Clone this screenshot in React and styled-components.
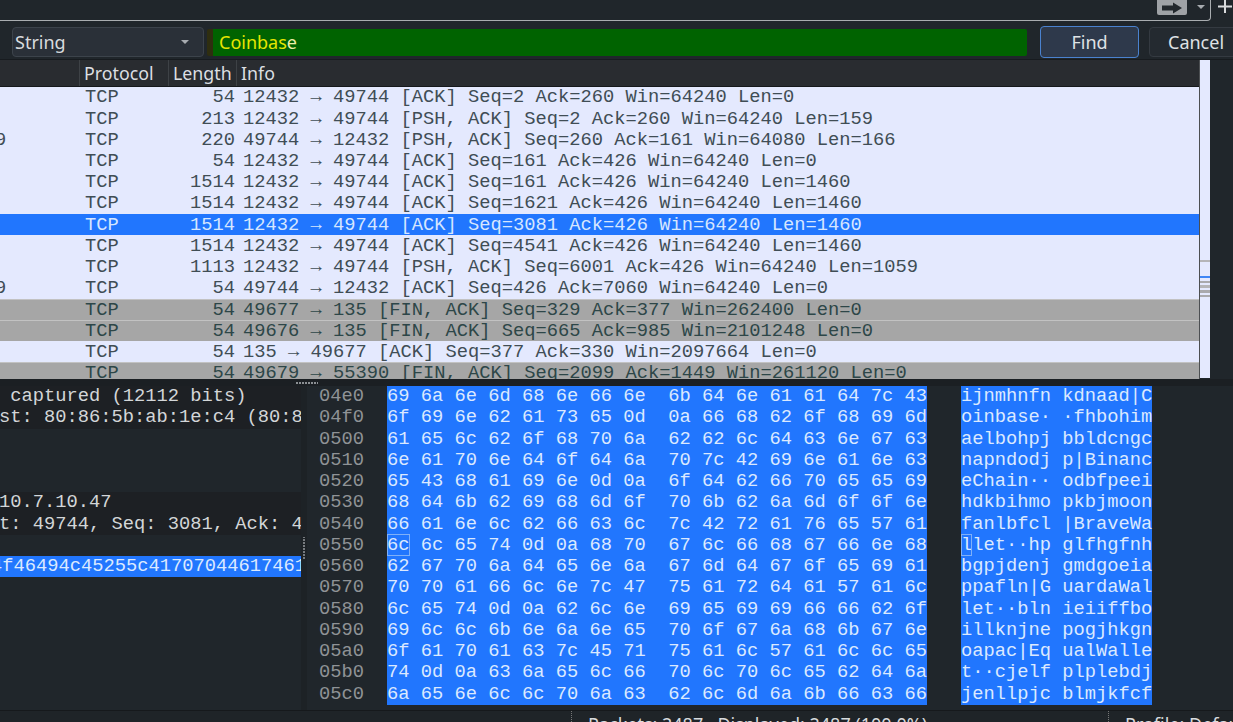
import React from 'react';
import styled, { createGlobalStyle } from 'styled-components';

const GlobalStyle = createGlobalStyle`
  html, body {
    margin: 0;
    padding: 0;
    background: #20262b;
    overflow: hidden;
  }
`;

const mono = `"Liberation Mono", monospace`;
const sans = `"Noto Sans", sans-serif`;
const blue = '#2176fe';

const Window = styled.div`
  width: 1233px;
  height: 722px;
  overflow: hidden;
  display: flex;
  flex-direction: column;
  background: #20262b;
  font-family: ${sans};
`;

const TopBar = styled.div`
  flex: none;
  height: 22px;
  display: flex;
  align-items: flex-start;
`;

const TabFrame = styled.div`
  box-sizing: border-box;
  width: 1211px;
  height: 21px;
  display: flex;
  justify-content: flex-end;
  align-items: flex-start;
  gap: 10px;
  padding-right: 5px;
  border-right: 1px solid #a9adb0;
  border-bottom: 1px solid #a9adb0;
  border-bottom-right-radius: 4px;
`;

const ArrowButton = styled.div`
  width: 30px;
  height: 15px;
  background: #9fa2a6;
  border-radius: 0 0 2px 2px;
  display: flex;
  align-items: center;
  justify-content: center;
`;

const Caret = styled.div`
  width: 0;
  height: 0;
  margin-top: ${(p) => p.$top || 0}px;
  border-left: 4px solid transparent;
  border-right: 4px solid transparent;
  border-top: 4px solid #a7abb0;
`;

const PlusWrap = styled.div`
  margin-left: 6px;
  color: #d8dadc;
  line-height: 0;
`;

const FindBar = styled.div`
  flex: none;
  height: 38px;
  box-sizing: border-box;
  padding: 5px 0 2px 12px;
  display: flex;
  align-items: center;
  border-bottom: 1px solid #171b1f;
`;

const Combo = styled.div`
  flex: none;
  box-sizing: border-box;
  width: 192px;
  height: 30px;
  padding: 0 14px 0 2px;
  display: flex;
  align-items: center;
  justify-content: space-between;
  background: #2a3038;
  border: 1px solid #3c434b;
  border-radius: 4px;
  color: #d8dbde;
  font-size: 18px;
`;

const SearchField = styled.div`
  flex: none;
  box-sizing: border-box;
  width: 820px;
  height: 27px;
  margin-left: 3px;
  margin-right: 13px;
  padding-left: 6px;
  border-left: 6px solid #2f2e10;
  display: flex;
  align-items: center;
  background: #006300;
  border-radius: 2px;
  color: #e6e600;
  font-size: 18px;
`;

const LastLetter = styled.span`
  color: #eeeea8;
`;

const Button = styled.div`
  flex: none;
  box-sizing: border-box;
  width: ${(p) => (p.$primary ? '99px' : '100px')};
  height: ${(p) => (p.$primary ? '32px' : '30px')};
  margin-left: ${(p) => (p.$primary ? '0' : '10px')};
  display: flex;
  align-items: center;
  justify-content: ${(p) => (p.$primary ? 'center' : 'flex-start')};
  padding-left: ${(p) => (p.$primary ? '0' : '18px')};
  background: ${(p) => (p.$primary ? '#2e394b' : '#242a30')};
  border: 1px solid ${(p) => (p.$primary ? '#4a82cf' : '#343a41')};
  border-radius: 4px;
  color: #dfe2e5;
  font-size: 18px;
`;

const ListArea = styled.div`
  flex: none;
  height: 319px;
  display: flex;
`;

const PacketList = styled.div`
  box-sizing: border-box;
  width: 1200px;
  border-right: 1px solid #4c4f52;
  overflow: hidden;
`;

const HeaderRow = styled.div`
  box-sizing: border-box;
  height: 26.8px;
  display: flex;
  align-items: center;
  background: #292c30;
  border-bottom: 1px solid #15181b;
  color: #dcdfe2;
  font-size: 17.8px;
`;

const HeaderCell = styled.div`
  box-sizing: border-box;
  width: ${(p) => p.$w}px;
  height: 100%;
  padding-left: 4px;
  display: flex;
  align-items: center;
  border-right: ${(p) => (p.$last ? 'none' : '1px solid #3e4246')};
  flex: ${(p) => (p.$last ? 1 : 'none')};
`;

const rowBg = { light: '#e4e9fe', gray: '#a6a6a6', selected: blue };
const rowText = { light: '#404d55', gray: '#2d4648', selected: '#d6e6ff' };

const Row = styled.div`
  box-sizing: border-box;
  height: 21.2px;
  display: flex;
  align-items: center;
  white-space: pre;
  overflow: hidden;
  font-family: ${mono};
  font-size: 18.75px;
  background: ${(p) => rowBg[p.$kind]};
  color: ${(p) => rowText[p.$kind]};
  border-top: ${(p) => (p.$kind === 'gray' ? '1px solid #c2c2c2' : 'none')};
`;

const ClippedCell = styled.div`
  flex: none;
  width: 85px;
  text-indent: -5px;
  overflow: hidden;
`;

const ProtoCell = styled.div`
  flex: none;
  width: 80px;
`;

const LengthCell = styled.div`
  flex: none;
  width: 70px;
  text-align: right;
`;

const InfoCell = styled.div`
  flex: 1;
  margin-left: 8px;
`;

const Minimap = styled.div`
  position: relative;
  box-sizing: border-box;
  width: 10px;
  height: 318px;
  background: #e4e9fe;
`;

const Mark = styled.div`
  position: absolute;
  left: 0;
  right: 0;
  top: ${(p) => p.$top}px;
  height: ${(p) => p.$h || 1}px;
  background: ${(p) => p.$color};
`;

const SplitRow = styled.div`
  flex: none;
  height: 7px;
  display: flex;
  justify-content: center;
  align-items: center;
  background: #1b1f23;
`;

const Grip = styled.div`
  width: 22px;
  height: 2px;
  margin-left: -620px;
  background: repeating-linear-gradient(90deg, #8b8f93 0 2px, transparent 2px 3px);
`;

const Bottom = styled.div`
  flex: none;
  height: 324px;
  display: flex;
`;

const TreePane = styled.div`
  flex: none;
  width: 301px;
  overflow: hidden;
  font-family: ${mono};
  font-size: 18.75px;
  color: #d3d6d8;
  background: #20262b;
`;

const TreeRow = styled.div`
  height: 21.25px;
  line-height: 21.25px;
  white-space: pre;
  text-indent: ${(p) => p.$indent || -1}px;
  overflow: hidden;
  background: ${(p) => (p.$selected ? blue : p.$dim ? '#1d2024' : 'transparent')};
  color: ${(p) => (p.$selected ? '#dbe9ff' : 'inherit')};
`;

const VSplit = styled.div`
  flex: none;
  width: 6px;
  display: flex;
  align-items: center;
  justify-content: center;
  background: #1d2226;
`;

const VGrip = styled.div`
  width: 2px;
  height: 22px;
  background: repeating-linear-gradient(0deg, #777b7f 0 2px, transparent 2px 3px);
`;

const HexPane = styled.div`
  flex: 1;
  box-sizing: border-box;
  padding-left: 12px;
  font-family: ${mono};
  font-size: 18.75px;
  background: #20262b;
`;

const HexRow = styled.div`
  height: 21.25px;
  line-height: 21.25px;
  display: flex;
  white-space: pre;
`;

const Offset = styled.div`
  flex: none;
  width: 68px;
  color: #8f9396;
`;

const Selected = styled.div`
  flex: none;
  width: ${(p) => p.$w}px;
  margin-right: ${(p) => p.$gap || 0}px;
  background: ${blue};
  color: #dbe9ff;
`;

const Cursor = styled.span`
  outline: 1px solid #7fb0f8;
  outline-offset: -1px;
`;

const StatusBar = styled.div`
  flex: none;
  height: 12px;
  box-sizing: border-box;
  display: flex;
  align-items: flex-start;
  padding-left: 571px;
  background: #1f2428;
  border-top: 1px solid #16191c;
  color: #d8dbde;
  font-size: 18px;
  line-height: 27px;
  white-space: pre;
  overflow: hidden;
`;

const StatusText = styled.div`
  flex: none;
  width: ${(p) => p.$w}px;
  padding-left: 16px;
  box-sizing: border-box;
  border-left: 1px dotted #777;
`;

const packets = [
  ['', 'light', '54', '12432 → 49744 [ACK] Seq=2 Ack=260 Win=64240 Len=0'],
  ['', 'light', '213', '12432 → 49744 [PSH, ACK] Seq=2 Ack=260 Win=64240 Len=159'],
  ['9', 'light', '220', '49744 → 12432 [PSH, ACK] Seq=260 Ack=161 Win=64080 Len=166'],
  ['', 'light', '54', '12432 → 49744 [ACK] Seq=161 Ack=426 Win=64240 Len=0'],
  ['', 'light', '1514', '12432 → 49744 [ACK] Seq=161 Ack=426 Win=64240 Len=1460'],
  ['', 'light', '1514', '12432 → 49744 [ACK] Seq=1621 Ack=426 Win=64240 Len=1460'],
  ['', 'selected', '1514', '12432 → 49744 [ACK] Seq=3081 Ack=426 Win=64240 Len=1460'],
  ['', 'light', '1514', '12432 → 49744 [ACK] Seq=4541 Ack=426 Win=64240 Len=1460'],
  ['', 'light', '1113', '12432 → 49744 [PSH, ACK] Seq=6001 Ack=426 Win=64240 Len=1059'],
  ['9', 'light', '54', '49744 → 12432 [ACK] Seq=426 Ack=7060 Win=64240 Len=0'],
  ['', 'gray', '54', '49677 → 135 [FIN, ACK] Seq=329 Ack=377 Win=262400 Len=0'],
  ['', 'gray', '54', '49676 → 135 [FIN, ACK] Seq=665 Ack=985 Win=2101248 Len=0'],
  ['', 'light', '54', '135 → 49677 [ACK] Seq=377 Ack=330 Win=2097664 Len=0'],
  ['', 'gray', '54', '49679 → 55390 [FIN, ACK] Seq=2099 Ack=1449 Win=261120 Len=0'],
];

const tree = [
  { text: ' captured (12112 bits)', dim: true },
  { text: 'st: 80:86:5b:ab:1e:c4 (80:8', dim: true },
  { text: '' },
  { text: '' },
  { text: '' },
  { text: '10.7.10.47', dim: true },
  { text: 't: 49744, Seq: 3081, Ack: 4', dim: true },
  { text: '' },
  { text: '4f46494c45255c41707044617461', selected: true, indent: -9 },
];

const dump = [
  ['04e0', '69 6a 6e 6d 68 6e 66 6e', '6b 64 6e 61 61 64 7c 43', 'ijnmhnfn kdnaad|C'],
  ['04f0', '6f 69 6e 62 61 73 65 0d', '0a 66 68 62 6f 68 69 6d', 'oinbase· ·fhbohim'],
  ['0500', '61 65 6c 62 6f 68 70 6a', '62 62 6c 64 63 6e 67 63', 'aelbohpj bbldcngc'],
  ['0510', '6e 61 70 6e 64 6f 64 6a', '70 7c 42 69 6e 61 6e 63', 'napndodj p|Binanc'],
  ['0520', '65 43 68 61 69 6e 0d 0a', '6f 64 62 66 70 65 65 69', 'eChain·· odbfpeei'],
  ['0530', '68 64 6b 62 69 68 6d 6f', '70 6b 62 6a 6d 6f 6f 6e', 'hdkbihmo pkbjmoon'],
  ['0540', '66 61 6e 6c 62 66 63 6c', '7c 42 72 61 76 65 57 61', 'fanlbfcl |BraveWa'],
  ['0550', '6c 6c 65 74 0d 0a 68 70', '67 6c 66 68 67 66 6e 68', 'llet··hp glfhgfnh'],
  ['0560', '62 67 70 6a 64 65 6e 6a', '67 6d 64 67 6f 65 69 61', 'bgpjdenj gmdgoeia'],
  ['0570', '70 70 61 66 6c 6e 7c 47', '75 61 72 64 61 57 61 6c', 'ppafln|G uardaWal'],
  ['0580', '6c 65 74 0d 0a 62 6c 6e', '69 65 69 69 66 66 62 6f', 'let··bln ieiiffbo'],
  ['0590', '69 6c 6c 6b 6e 6a 6e 65', '70 6f 67 6a 68 6b 67 6e', 'illknjne pogjhkgn'],
  ['05a0', '6f 61 70 61 63 7c 45 71', '75 61 6c 57 61 6c 6c 65', 'oapac|Eq ualWalle'],
  ['05b0', '74 0d 0a 63 6a 65 6c 66', '70 6c 70 6c 65 62 64 6a', 't··cjelf plplebdj'],
  ['05c0', '6a 65 6e 6c 6c 70 6a 63', '62 6c 6d 6a 6b 66 63 66', 'jenllpjc blmjkfcf'],
];

const marks = [
  { top: 200, h: 2, color: '#b5b5b8' },
  { top: 216, h: 2, color: '#3f86f5' },
  { top: 221, h: 2, color: '#a9a9ac' },
  { top: 225, h: 3, color: '#b5b5b8' },
  { top: 230, h: 3, color: '#a9a9ac' },
  { top: 235, h: 2, color: '#a9a9ac' },
];

function HexLine({ line, focus }) {
  const [offset, left, right, ascii] = line;
  return (
    <HexRow>
      <Offset>{offset}</Offset>
      <Selected $w={540} $gap={34}>
        {focus ? <Cursor>{left.slice(0, 2)}</Cursor> : left.slice(0, 2)}
        {left.slice(2)}  {right}
      </Selected>
      <Selected $w={191}>
        {focus ? <Cursor>{ascii[0]}</Cursor> : ascii[0]}
        {ascii.slice(1)}
      </Selected>
    </HexRow>
  );
}

export default function App() {
  return (
    <Window>
      <GlobalStyle />
      <TopBar>
        <TabFrame>
          <ArrowButton>
            <svg width="20" height="12" viewBox="0 0 20 12">
              <path d="M0 3.5h11V.5L20 6l-9 5.5v-3H0z" fill="#23282d" />
            </svg>
          </ArrowButton>
          <Caret $top={5} />
        </TabFrame>
        <PlusWrap>
          <svg width="16" height="16" viewBox="0 0 16 16">
            <path d="M8 0v13M1 6.5h14" stroke="currentColor" strokeWidth="2" fill="none" />
          </svg>
        </PlusWrap>
      </TopBar>

      <FindBar>
        <Combo>
          String
          <Caret />
        </Combo>
        <SearchField>
          <span>
            Coinbas<LastLetter>e</LastLetter>
          </span>
        </SearchField>
        <Button $primary>Find</Button>
        <Button>Cancel</Button>
      </FindBar>

      <ListArea>
        <PacketList>
          <HeaderRow>
            <HeaderCell $w={80} />
            <HeaderCell $w={89}>Protocol</HeaderCell>
            <HeaderCell $w={68}>Length</HeaderCell>
            <HeaderCell $last>Info</HeaderCell>
          </HeaderRow>
          {packets.map(([clip, kind, length, info], i) => (
            <Row key={i} $kind={kind}>
              <ClippedCell>{clip}</ClippedCell>
              <ProtoCell>TCP</ProtoCell>
              <LengthCell>{length}</LengthCell>
              <InfoCell>{info}</InfoCell>
            </Row>
          ))}
        </PacketList>
        <Minimap>
          {marks.map((m) => (
            <Mark key={m.top} $top={m.top} $h={m.h} $color={m.color} />
          ))}
        </Minimap>
      </ListArea>

      <SplitRow>
        <Grip />
      </SplitRow>

      <Bottom>
        <TreePane>
          {tree.map((r, i) => (
            <TreeRow key={i} $dim={r.dim} $selected={r.selected} $indent={r.indent}>
              {r.text}
            </TreeRow>
          ))}
        </TreePane>
        <VSplit>
          <VGrip />
        </VSplit>
        <HexPane>
          {dump.map((line) => (
            <HexLine key={line[0]} line={line} focus={line[0] === '0550'} />
          ))}
        </HexPane>
      </Bottom>

      <StatusBar>
        <StatusText $w={537}>Packets: 2487 · Displayed: 2487 (100.0%)</StatusText>
        <StatusText $w={120}>Profile: Default</StatusText>
      </StatusBar>
    </Window>
  );
}
